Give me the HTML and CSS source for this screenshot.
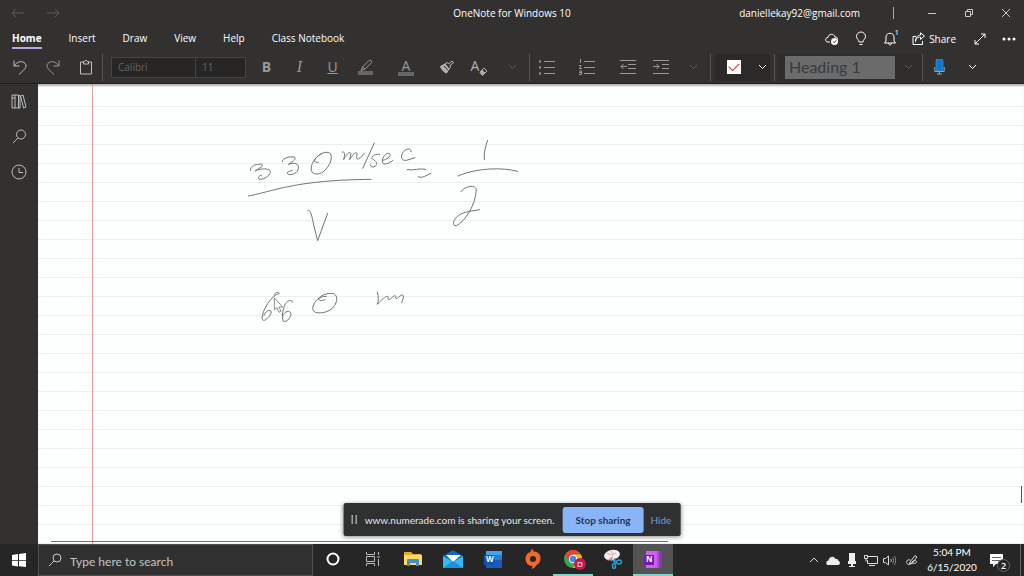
FILE: index.html
```html
<!doctype html>
<html lang="en">
<head>
<meta charset="utf-8">
<meta name="viewport" content="width=device-width, initial-scale=1">
<title>OneNote for Windows 10</title>
<link rel="stylesheet" href="styles.css">
</head>

<body>
<div class="desktop">
	<header class="titlebar">
		<div class="history">
			<button class="hist" aria-label="Back"><svg width="14" height="10" viewBox="0 0 14 10"><path d="M13 5H1M5 1L1 5l4 4"/></svg></button>
			<button class="hist" aria-label="Forward"><svg width="14" height="10" viewBox="0 0 14 10"><path d="M1 5h12M9 1l4 4-4 4"/></svg></button>
		</div>
		<h1 class="title">OneNote for Windows 10</h1>
		<div class="account">
			<span class="email">daniellekay92@gmail.com</span>
			<span class="bar"></span>
			<button class="win" aria-label="Minimize"><svg width="10" height="10" viewBox="0 0 10 10"><path d="M1 5.500h8"/></svg></button>
			<button class="win" aria-label="Restore"><svg width="10" height="10" viewBox="0 0 10 10"><path d="M1.500 3.500h5v5h-5zM3.500 3.500v-2h5v5h-2"/></svg></button>
			<button class="win" aria-label="Close"><svg width="10" height="10" viewBox="0 0 10 10"><path d="M1 1l8 8M9 1L1 9"/></svg></button>
		</div>
	</header>

	<div class="menubar">
		<nav class="tabs">
			<a href="#" class="on">Home</a>
			<a href="#">Insert</a>
			<a href="#">Draw</a>
			<a href="#">View</a>
			<a href="#">Help</a>
			<a href="#">Class Notebook</a>
		</nav>
		<div class="actions">
			<button class="act" aria-label="Sync"><svg width="16" height="14" viewBox="0 0 16 14"><path d="M6 10H4C0.500 10 1 5.500 4 5.500 4.500 1.500 10 1 11 5c2 0 3 1 2.500 2.500"/><circle cx="10.500" cy="9.500" r="3.500" fill="#fff" stroke="none"/><path d="M9 9.500l1.200 1.200 2-2.400" stroke="#323130"/></svg></button>
			<button class="act" aria-label="Tell me"><svg width="12" height="16" viewBox="0 0 12 16"><path d="M4 11C4 8.500 1.500 8 1.500 5.500a4.500 4.500 0 0 1 9 0C10.500 8 8 8.500 8 11zM4.500 13.500h3"/></svg></button>
			<button class="act" aria-label="Notifications"><svg width="12" height="14" viewBox="0 0 12 14"><path d="M.5 11h11L10 9V5C10 0 2 0 2 5v4zM4.500 11c0 2.500 3 2.500 3 0"/></svg><sup class="count">1</sup></button>
			<button class="share"><svg width="13" height="13" viewBox="0 0 13 13"><path d="M4 4.500H1v8h9.500V9M3.500 9.500C4 6 6 5 8.500 5v2.500L12.500 4 8.500.8V3C5.500 3 3.500 5.500 3.500 9.500z"/></svg>Share</button>
			<button class="act wide" aria-label="Full screen"><svg width="12" height="12" viewBox="0 0 12 12"><path d="M1 11L11 1M7 1h4v4M1 7v4h4"/></svg></button>
			<button class="act" aria-label="More"><svg width="14" height="4" viewBox="0 0 14 4"><g fill="#fff" stroke="none"><circle cx="2" cy="2" r="1.500"/><circle cx="7" cy="2" r="1.500"/><circle cx="12" cy="2" r="1.500"/></g></svg></button>
		</div>
	</div>

	<div class="toolbar">
		<button class="tool bright" aria-label="Undo"><svg width="16" height="17" viewBox="0 0 16 17"><path d="M2 1.500v5.500h5.500M2 7c3-4 7-5.500 10-3.500 4 3 2 6-5 12"/></svg></button>
		<button class="tool" aria-label="Redo"><svg width="16" height="17" viewBox="0 0 16 17"><path d="M14 1.500v5.500H8.500M14 7c-3-4-7-5.500-10-3.500-4 3-2 6 5 12"/></svg></button>
		<button class="tool bright" aria-label="Paste"><svg width="14" height="16" viewBox="0 0 14 16"><path d="M4 3H1.500v12h11V3H10M4.500 5V2.500h1.300c0-1.500 2.400-1.500 2.400 0h1.300V5z"/></svg></button>
		<span class="sep"></span>
		<div class="fontbox">
			<input class="fname" type="text" value="Calibri" aria-label="Font">
			<input class="fsize" type="text" value="11" aria-label="Font size">
		</div>
		<button class="tool letter"><b>B</b></button>
		<button class="tool letter"><i>I</i></button>
		<button class="tool letter"><u>U</u></button>
		<button class="tool" aria-label="Highlight"><svg width="17" height="17" viewBox="0 0 17 17"><path d="M5.500 8L12 1.500c1.500-1 3.500.8 2.500 2.300L8 10zM5.500 8L4 11.500 8 10"/><path d="M1 12h15v4H1z" fill="#666" stroke="none"/></svg></button>
		<button class="tool wide color" aria-label="Font color">A</button>
		<button class="tool bright" aria-label="Format painter"><svg width="16" height="14" viewBox="0 0 16 14"><path d="M1.500 6.500l4.500-2.500 4 5L7.500 13C5 12 2.500 9.500 1.500 6.500z" fill="#aaa"/><path d="M6 4l2-1.500 1.800 1.300L13 1l1.500 1.800L11 5.500l.5 2L10 9M4 8l4 3" /><path d="M5 6l4 4.500" stroke="#323130"/></svg></button>
		<button class="tool clear" aria-label="Clear formatting">A<svg width="9" height="9" viewBox="0 0 9 9"><path d="M1 5l4-4 3 3-4 4H3z"/><path d="M1 5l2-2 3 3-2 2H3z" fill="#aaa"/></svg></button>
		<button class="tool dim" aria-label="More font options"><svg width="9" height="6" viewBox="0 0 9 6"><path d="M1 1l3.500 3.500L8 1"/></svg></button>
		<span class="sep"></span>
		<button class="tool" aria-label="Bullets"><svg width="16" height="16" viewBox="0 0 16 16"><path d="M5 2.500h11M5 8.500h11M5 14.500h11"/><path d="M0 1.500h2v2H0zM0 7.500h2v2H0zM0 13.500h2v2H0z" fill="#999" stroke="none"/></svg></button>
		<button class="tool wide" aria-label="Numbering"><svg width="16" height="16" viewBox="0 0 16 16"><path d="M5 2.500h11M5 8.500h11M5 14.500h11M1.500 0v4M0 6.500h2L.5 9.500H3M0 12h2.500v3.500H0M0 13.500h2"/></svg></button>
		<button class="tool" aria-label="Decrease indent"><svg width="16" height="16" viewBox="0 0 16 16"><path d="M0 1.500h16M8 5.500h8M8 9.500h8M0 14.500h16M7 7.500H1M3.500 5L1 7.500 3.500 10"/></svg></button>
		<button class="tool" aria-label="Increase indent"><svg width="16" height="16" viewBox="0 0 16 16"><path d="M0 1.500h16M9 5.500h7M9 9.500h7M0 14.500h16M0 7.500h6M3.500 5L6 7.500 3.500 10"/></svg></button>
		<button class="tool dim" aria-label="More paragraph options"><svg width="9" height="6" viewBox="0 0 9 6"><path d="M1 1l3.500 3.500L8 1"/></svg></button>
		<span class="sep"></span>
		<div class="tag">
			<label class="todo"><input type="checkbox" checked aria-label="To do tag"></label>
			<button class="drop" aria-label="Tags"><svg width="9" height="6" viewBox="0 0 9 6"><path d="M1 1l3.500 3.500L8 1"/></svg></button>
		</div>
		<span class="sep"></span>
		<div class="style">
			<button class="heading">Heading 1</button>
			<button class="drop dim" aria-label="Styles"><svg width="9" height="6" viewBox="0 0 9 6"><path d="M1 1l3.500 3.500L8 1"/></svg></button>
		</div>
		<span class="sep"></span>
		<button class="tool" aria-label="Dictate"><svg width="11" height="16" viewBox="0 0 11 16"><path d="M.8 8v4.500h9.400V8M5.500 12.500V15M3 15h5" stroke="#8aa9c0"/><rect x="2" y="0" width="7" height="12" rx="2" fill="#0f75cf" stroke="#62a8e0" stroke-width=".5"/></svg></button>
		<button class="tool white" aria-label="Dictate options"><svg width="9" height="6" viewBox="0 0 9 6"><path d="M1 1l3.500 3.500L8 1"/></svg></button>
	</div>

	<div class="work">
		<aside class="side">
			<button aria-label="Notebooks"><svg width="16" height="15" viewBox="0 0 16 15"><path d="M1 1h3v13H1zM4 1h3.500v13H4M7.500 2v12M9.500 2l2.500-1 3 12-2.500 1zM7.500 1.500h1.500V14H7.500M1 4h3"/></svg></button>
			<button aria-label="Search"><svg width="15" height="15" viewBox="0 0 15 15"><circle cx="9" cy="5.500" r="4.500"/><path d="M6 9L1 14"/></svg></button>
			<button aria-label="Recent"><svg width="16" height="16" viewBox="0 0 16 16"><circle cx="8" cy="8" r="7"/><path d="M8 4v4.500h4"/></svg></button>
		</aside>
		<main class="page">
			<svg class="ink" width="300" height="210" viewBox="0 0 900 630" role="img" aria-label="330 m/sec over V = 1 over 2, 660 m">
				<path d="M46 136C46 122 62 118 72 118C84 116 84 120 78 126L60 138C82 128 108 130 106 142C104 154 82 166 72 162C66 158 74 152 80 150"/>
				<path d="M142 110C142 98 166 94 178 96C186 100 176 108 160 118C180 110 192 118 190 130C188 144 172 152 160 148C152 144 160 138 172 136"/>
				<path d="M260 86C240 96 226 118 229 136C232 152 258 150 272 134C288 116 294 92 284 84C272 78 252 86 240 102C236 110 244 114 250 112"/>
				<path d="M321 82C326 76 332 84 326 104C334 86 346 78 348 86L344 104C354 88 364 78 366 86C366 94 362 104 370 102C378 98 384 88 388 84"/>
				<path d="M418 54L383 130"/>
				<path d="M434 88C420 86 406 94 412 102C424 108 430 118 420 124C412 128 406 126 406 120"/>
				<path d="M444 106C458 102 470 92 464 86C454 80 440 98 442 112C446 122 462 116 474 106"/>
				<path d="M528 80C530 68 512 70 504 82C494 98 502 108 514 106C524 104 532 100 540 98"/>
				<path d="M517 134C535 138 555 128 572 133M550 155C562 162 574 150 588 145"/>
				<path d="M40 213C120 198 180 165 408 163"/>
				<path d="M218 257C226 250 230 270 236 300L248 347L278 265"/>
				<path d="M758 46C752 62 746 80 748 104"/>
				<path d="M670 153L678 149C730 130 800 126 848 139"/>
				<path d="M678 200C690 182 722 178 724 194C722 240 690 290 664 302C650 304 654 284 670 272C690 258 716 258 734 254"/>
				<path d="M117 510C120 500 134 500 132 506C110 510 81 555 81 581C85 595 105 577 109 561C105 549 89 561 87 571"/>
				<path d="M173 531C171 523 155 525 149 541C143 557 139 577 145 589C157 593 171 573 167 563C159 553 143 565 143 575"/>
				<path d="M274 514C248 512 233 535 233 553C237 569 273 567 293 549C311 529 309 505 289 505C271 505 253 513 251 523C255 530 264 526 270 524"/>
				<path d="M427 501C431 515 431 528 427 538C440 524 458 508 460 516C458 524 460 528 468 520C478 510 484 510 482 518C482 526 492 514 500 510C508 508 506 520 500 533"/>
				<path class="cursor" d="M118 520V554L126 548L132 562L138 559L132 546H142z"/>
			</svg>
			<div class="hscroll"></div>
			<div class="vscroll"></div>
		</main>
	</div>

	<footer class="taskbar">
		<button class="start" aria-label="Start"><svg width="14" height="14" viewBox="0 0 14 14"><path fill="#fff" stroke="none" d="M0 2l6-1v6H0zM7 .9L14 0v7H7zM0 7.700h6v5.700l-6-.9zM7 7.700h7V14l-7-.8z"/></svg></button>
		<label class="search">
			<svg width="14" height="14" viewBox="0 0 14 14"><circle cx="9" cy="5" r="4"/><path d="M6 8L1 13"/></svg>
			<input type="text" placeholder="Type here to search" aria-label="Search">
		</label>
		<div class="apps">
			<button class="app" aria-label="Cortana"><svg width="14" height="14" viewBox="0 0 14 14"><circle cx="7" cy="7" r="5.500" fill="none" stroke="#fff" stroke-width="2"/></svg></button>
			<button class="app" aria-label="Task view"><svg width="14" height="14" viewBox="0 0 14 14"><path d="M.5 0v2.500h8V0M.5 14v-2.500h8V14M.5 4.500h8v5h-8zM12.500 0v3M12.500 7v7M11 5h3" fill="none" stroke="#bbb"/></svg></button>
			<button class="app" aria-label="File Explorer"><svg width="18" height="16" viewBox="0 0 18 16"><path fill="#e8a82c" d="M0 1h7l2 2h8v11H0z"/><path fill="#ffd968" d="M0 4h18v10H0z"/><path fill="#3e8fd0" d="M3 15V9q0-1 1-1h10q1 0 1 1v6h-3v-3H6v3z"/></svg></button>
			<button class="app" aria-label="Mail"><svg width="20" height="18" viewBox="0 0 20 18"><path fill="#1268b8" d="M0 6l10-6 10 6v11H0z"/><path fill="#fff" d="M3 5h15l-8 7z"/><path fill="#38b8f0" d="M0 6l10 6 10-6v12H0z"/><path fill="#1a91dc" d="M0 18l10-7 10 7z"/></svg></button>
			<button class="app" aria-label="Word"><span class="office word">W</span></button>
			<button class="app" aria-label="Origin"><svg width="16" height="20" viewBox="0 0 16 20"><path fill="#f26a2a" fill-rule="evenodd" d="M7 0C6 1 5.500 2 5.500 3 2 4 .5 7 .5 10c0 4 3 7 7 7-.2 1.500-.5 2.200-1 3 3-1 4.500-2.500 5-4 3-1.500 4-4 4-7 0-4-3-6.500-7-6.500C8.400 1.500 8 .8 7 0zM8 7a3 3 0 1 0 0 6 3 3 0 0 0 0-6z"/></svg></button>
			<button class="app open" aria-label="Chrome"><span class="chrome"><svg width="18" height="18" viewBox="0 0 18 18"><circle cx="9" cy="9" r="9" fill="#35a853"/><path fill="#ea4335" d="M1.200 4.500a9 9 0 0 1 15.600 0H9L5 11z"/><path fill="#fbbc05" d="M16.800 4.500A9 9 0 0 1 9 18l4-9-4-4.500z"/><circle cx="9" cy="9" r="4.200" fill="#fff"/><circle cx="9" cy="9" r="3.200" fill="#4285f4"/></svg><span class="badge">D</span></span></button>
			<button class="app" aria-label="Snip"><svg width="20" height="20" viewBox="0 0 20 20"><ellipse cx="9" cy="6" rx="8" ry="5" fill="#f4eeee" transform="rotate(-12 9 6)"/><path d="M4 4l4 2M8 2l2 4M13 4l-4 2" stroke="#e0a0a0"/><path d="M10 7l-6 5 5-2z" fill="#e26060"/><g fill="none" stroke="#2c9bd0" stroke-width="1.500"><ellipse cx="16" cy="13" rx="2.500" ry="2"/><ellipse cx="11" cy="17" rx="1.500" ry="2.500"/><path d="M14 13L8 11M11.500 15L12 9"/></g></svg></button>
			<button class="app open active" aria-label="OneNote"><span class="office onenote">N</span></button>
		</div>
		<div class="tray">
			<button aria-label="Show hidden icons"><svg width="10" height="6" viewBox="0 0 10 6"><path d="M1 5l4-4 4 4"/></svg></button>
			<button aria-label="OneDrive"><svg width="14" height="9" viewBox="0 0 14 9"><path fill="#eee" stroke="none" d="M2.500 9C-.5 9-.5 5 2.500 4.500 3 .5 8-1 9.500 3 12 2.500 12.500 4 12.500 5c2 .5 2 4-.5 4z"/></svg></button>
			<button aria-label="Microphone"><svg width="8" height="14" viewBox="0 0 8 14"><path fill="#eee" stroke="none" d="M1 0h6v9H1zM0 8h8v3H5v2h2v1H1v-1h2v-2H0z"/></svg></button>
			<button aria-label="Network"><svg width="14" height="11" viewBox="0 0 14 11"><path d="M4 1.500h9.500v7H3.500V5M5 10.500h6M.5.5h3v3h-3zM2 3.500v3"/></svg></button>
			<button aria-label="Volume"><svg width="13" height="11" viewBox="0 0 13 11"><path d="M.5 3.500h2L5.500 1v9l-3-2.500h-2zM7.500 4c1 1 1 2 0 3"/><path d="M9.500 2.500c1.500 2 1.500 4 0 6M11.500 1c1.500 3 1.500 6 0 9" stroke="#888"/></svg></button>
			<button class="pen" aria-label="Windows Ink"><svg width="12" height="12" viewBox="0 0 12 12"><path d="M4 8l5-6.500 2 1.500-5 6.500-2.500.5zM4 6C1 5 0 8 1 9.500c2 2.500 4 0 5-1.500s4-2 4.500-.5S8 10 6 9"/></svg></button>
			<div class="clock"><time>5:04 PM</time><time>6/15/2020</time></div>
			<button class="notify" aria-label="Action center"><svg width="14" height="13" viewBox="0 0 14 13"><path fill="#fff" stroke="none" d="M0 0h13v10H6l-3 3v-3H0z"/><path d="M2 3.500h9M2 6.500h9" stroke="#666"/></svg><span class="num">2</span></button>
		</div>
	</footer>

	<div class="sharing" role="dialog" aria-label="Screen sharing">
		<span class="pause"></span>
		<p>www.numerade.com is sharing your screen.</p>
		<button class="stop">Stop sharing</button>
		<button class="hide">Hide</button>
	</div>
</div>
</body>
</html>
```
FILE: styles.css
```css
*{
	margin: 0;
	padding: 0;
	box-sizing: border-box;
}
body{
	font: 10px/16px "Open Sans", "Noto Sans", sans-serif;
	color: #fff;
	background: #323130;
}
button, input{
	font: inherit;
	color: inherit;
	background: none;
	border: 0;
	outline: 0;
}
button{
	display: flex;
	align-items: center;
	justify-content: center;
	flex-shrink: 0;
}
svg{
	display: block;
	flex-shrink: 0;
	fill: none;
	stroke: currentColor;
}
.desktop{
	height: 100vh;
	display: flex;
	flex-direction: column;
	position: relative;
	overflow: hidden;
}

/* title bar */
.titlebar{
	height: 26px;
	display: grid;
	grid-template-columns: 1fr auto 1fr;
	align-items: center;
}
.history{
	display: flex;
	color: #5c5b5a;
}
.hist{
	width: 35px;
	height: 24px;
}
.title{
	font-size: 10px;
	font-weight: 400;
}
.account{
	display: flex;
	align-items: center;
	justify-content: flex-end;
}
.bar{
	width: 1px;
	height: 12px;
	margin: 0 19px 0 33px;
	background: #aaa;
}
.win{
	width: 37px;
	height: 26px;
	color: #c8c8c8;
}

/* menu */
.menubar{
	height: 25px;
	padding: 0 4px 0 12px;
	display: flex;
	justify-content: space-between;
}
.tabs{
	display: flex;
	gap: 27px;
}
.tabs a{
	height: 23px;
	padding-top: 4px;
	color: #fff;
	text-decoration: none;
}
.tabs .on{
	font-weight: 700;
	border-bottom: 2px solid #b9a5e2;
}
.actions{
	display: flex;
	align-items: center;
}
.act{
	width: 29px;
	height: 23px;
	position: relative;
}
.actions .act:last-child{
	width: 22px;
}
.actions .wide{
	width: 36px;
}
.count{
	position: absolute;
	top: 0;
	right: 5px;
	font-size: 8px;
	line-height: 10px;
}
.share{
	height: 23px;
	gap: 4px;
	padding: 0 6px 0 8px;
}

/* toolbar */
.toolbar{
	height: 33px;
	padding: 0 3px;
	display: flex;
	align-items: center;
	border-bottom: 1px solid #1f1e1e;
	color: #999;
}
.tool{
	width: 33px;
	height: 28px;
}
.toolbar .wide{
	width: 48px;
}
.bright{
	color: #c0c0c0;
}
.dim{
	color: #5c5c5c;
}
.white{
	color: #fff;
}
.sep{
	width: 1px;
	height: 27px;
	flex-shrink: 0;
	background: #555;
}
.fontbox{
	display: flex;
	margin: 0 4px 0 8px;
	height: 21px;
	border: 1px solid #454443;
	background: #272625;
	color: #656463;
}
.fontbox input{
	padding: 0 6px;
}
.fname{
	width: 83px;
}
.fsize{
	width: 50px;
	border-left: 1px solid #454443;
}
.letter{
	font-size: 14px;
	line-height: 20px;
}
.letter i{
	font-family: "Liberation Serif", serif;
	font-size: 16px;
}
.color{
	flex-direction: column;
	font-size: 14px;
	line-height: 13px;
}
.color::after{
	content: "";
	width: 16px;
	height: 4px;
	background: #666;
}
.clear{
	align-items: flex-end;
	padding-bottom: 5px;
	font-size: 14px;
	line-height: 20px;
	color: #b0b0b0;
}
.tag{
	display: flex;
	align-items: center;
	height: 27px;
	width: 63px;
	padding-left: 4px;
	background: linear-gradient(90deg, #323130 4px, #2b2a29 4px, #2b2a29 59px, #323130 59px);
}
.todo{
	width: 37px;
	display: flex;
	justify-content: center;
}
.todo input{
	appearance: none;
	width: 14px;
	height: 14px;
	background: #fff;
	display: grid;
	place-items: center;
}
.todo input:checked::before{
	content: "";
	width: 9px;
	height: 5px;
	border: solid #d0392f;
	border-width: 0 0 1px 1px;
	transform: rotate(-45deg) translate(1px, -1px);
}
.drop{
	width: 20px;
	height: 27px;
	color: #fff;
}
.drop.dim{
	width: 27px;
	color: #5c5c5c;
}
.style{
	display: flex;
	align-items: center;
	margin: 0 0 0 3px;
	padding-left: 7px;
	background: #2e2d2c;
}
.heading{
	width: 110px;
	height: 23px;
	padding-left: 4px;
	justify-content: flex-start;
	background: #6b6b6b;
	color: #363c42;
	font-family: Lato, "Open Sans", sans-serif;
	font-size: 16px;
}

/* page */
.work{
	flex: 1;
	min-height: 0;
	display: flex;
}
.side{
	width: 38px;
	color: #bdbdbd;
}
.side button{
	width: 38px;
	height: 35px;
}
.page{
	flex: 1;
	position: relative;
	background: #fdfefe;
	background-image: linear-gradient(90deg, transparent 54px, #e59a9d 54px, #e59a9d 55px, transparent 55px), repeating-linear-gradient(#fdfefe 0, #fdfefe 18px, #e8f0f2 18px, #e8f0f2 19px);
	background-position: 0 0, 0 4px;
	box-shadow: inset 0 3px 2px -1px #b5b3b3;
}
.ink{
	position: absolute;
	left: 197px;
	top: 41px;
	color: #747474;
	stroke-width: 3;
	stroke-linecap: round;
	stroke-linejoin: round;
}
.cursor{
	fill: #fff;
	stroke: #555;
	stroke-width: 2;
}
.hscroll{
	position: absolute;
	left: 13px;
	right: 356px;
	bottom: 2px;
	height: 1px;
	background: #707070;
}
.vscroll{
	position: absolute;
	right: 2px;
	bottom: 41px;
	width: 1px;
	height: 17px;
	background: #555;
}

/* screen sharing */
.sharing{
	position: absolute;
	left: 50%;
	bottom: 40px;
	transform: translateX(-50%);
	height: 33px;
	padding: 0 9px 0 8px;
	display: flex;
	align-items: center;
	white-space: nowrap;
	font-family: Lato, "Open Sans", sans-serif;
	color: #e6e6e6;
	background: #2f3032;
	border-radius: 2px;
	box-shadow: 0 1px 4px #888;
}
.pause{
	width: 5px;
	height: 9px;
	margin-right: 8px;
	border: solid #ddd;
	border-width: 0 1px;
}
.stop{
	width: 81px;
	height: 26px;
	margin: 0 7px 0 8px;
	border-radius: 3px;
	background: #8ab4f8;
	color: #26364f;
	font-weight: 700;
}
.hide{
	color: #7499d8;
}

/* taskbar */
.taskbar{
	height: 32px;
	display: flex;
	background: #262626;
}
.start{
	width: 38px;
}
.search{
	width: 275px;
	display: flex;
	align-items: center;
	gap: 8px;
	padding-left: 9px;
	border: 1px solid #505050;
	background: #303030;
	color: #ccc;
}
.search input{
	flex: 1;
	min-width: 0;
	height: 28px;
	padding-top: 2px;
	font-family: Lato, "Open Sans", sans-serif;
	font-size: 12px;
}
.search input::placeholder{
	color: #c4c4c4;
	opacity: 1;
}
.apps{
	display: flex;
}
.app{
	width: 40px;
	border-bottom: 2px solid transparent;
}
.app svg{
	stroke: none;
}
.open{
	border-color: #7fd4cc;
}
.active{
	background: #535353;
}
.office{
	width: 18px;
	height: 17px;
	display: flex;
	align-items: center;
	justify-content: flex-start;
	padding-left: 2px;
	font-size: 8px;
	font-weight: 700;
	line-height: 10px;
}
.word{
	background: linear-gradient(#1752b0, #1752b0), linear-gradient(#41a5ee 4px, #2b7cd3 4px, #2b7cd3 9px, #185abd 9px);
	background-size: 10px 10px, 16px 17px;
	background-position: 0 4px, 2px 0;
	background-repeat: no-repeat;
}
.onenote{
	background: linear-gradient(#7719aa, #7719aa), linear-gradient(90deg, #ca64ea 11px, #ae4bd5 11px, #ae4bd5 13px, #9332bf 13px);
	background-size: 10px 10px, 16px 17px;
	background-position: 0 4px, 2px 0;
	background-repeat: no-repeat;
}
.chrome{
	position: relative;
}
.badge{
	position: absolute;
	right: -4px;
	bottom: -2px;
	width: 12px;
	height: 12px;
	border-radius: 50%;
	background: #c9184f;
	font-size: 8px;
	line-height: 12px;
}
.tray{
	margin-left: auto;
	padding-right: 3px;
	display: flex;
	color: #ddd;
}
.tray button{
	width: 19px;
}
.tray .pen{
	width: 25px;
}
.clock{
	width: 56px;
	display: flex;
	flex-direction: column;
	align-items: center;
	justify-content: center;
	font-family: Lato, "Open Sans", sans-serif;
	line-height: 15px;
	color: #fff;
}
.tray .notify{
	width: 41px;
	position: relative;
	border-right: 1px solid #666;
	padding-right: 6px;
}
.num{
	position: absolute;
	right: 10px;
	bottom: 4px;
	width: 13px;
	height: 13px;
	border: 1px solid #666;
	border-radius: 50%;
	background: #262626;
	font-size: 9px;
	font-weight: 600;
	line-height: 11px;
	color: #fff;
}
```
